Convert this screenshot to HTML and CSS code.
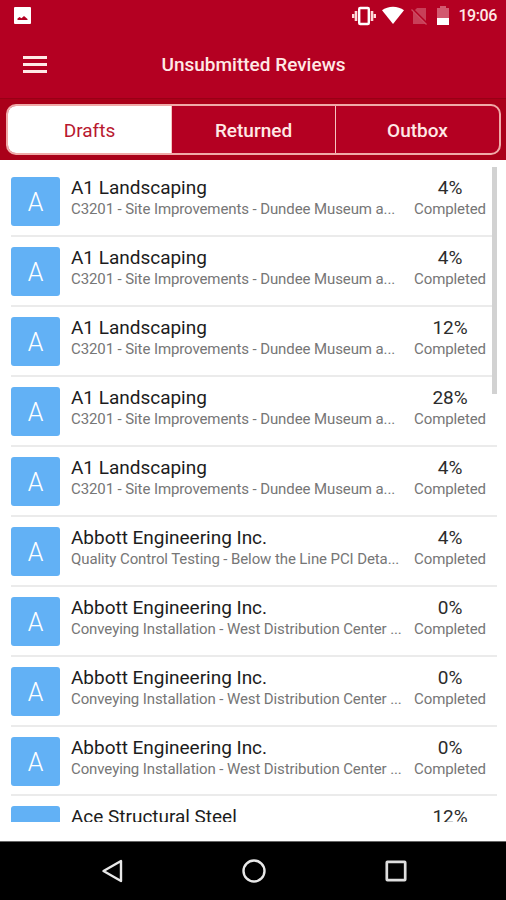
FILE: index.html
```html
<!DOCTYPE html>
<html lang="en">
<head>
    <meta charset="UTF-8">
    <meta name="viewport" content="width=device-width, initial-scale=1.0">
    <title>Unsubmitted Reviews</title>
    <link rel="stylesheet" href="styles.css">
</head>
<body>
    <header>
        <!-- Status bar -->
        <div class="status-bar">
            <svg class="photo-icon" width="17" height="17" viewBox="0 0 17 17">
                <rect width="17" height="17" rx="1" fill="#fff"/>
                <path d="M3.5 13v-1.5l2-1.5 2 1.2 2.5-2.2 3.5 3V13z" fill="#b40022"/>
            </svg>
            <svg class="vibrate-icon" width="24" height="20" viewBox="0 0 24 20">
                <path d="M1 8v4M4 5v10M20 5v10M23 8v4" stroke="#ffdada" stroke-width="2.6"/>
                <rect x="7.2" y="2" width="9.6" height="16" rx="1" fill="none" stroke="#fff" stroke-width="2.4"/>
            </svg>
            <svg class="wifi-icon" width="22" height="18" viewBox="0 0 22 18">
                <path d="M0 4.2C6-0.5 16-0.5 22 4.2L11 18z" fill="#fff"/>
            </svg>
            <svg class="sim-icon" width="17" height="18" viewBox="0 0 17 18">
                <path d="M6 1h9v16H2V5z" fill="#c83f58"/>
                <path d="M0 .5L16.5 17" stroke="#b40022" stroke-width="2"/>
                <path d="M0.5 2.5l15 15" stroke="#cd4c64" stroke-width="1.3"/>
            </svg>
            <svg class="battery-icon" width="12" height="19" viewBox="0 0 12 19">
                <path d="M0 2h3V0h6v2h3v10H0z" fill="#d2596f"/>
                <path d="M0 12h12v7H0z" fill="#fff"/>
            </svg>
            <span class="time">19:06</span>
        </div>

        <div class="title-bar">
            <div class="menu-btn"><span></span><span></span><span></span></div>
            <h1>Unsubmitted Reviews</h1>
        </div>

        <div class="tab-bar">
            <div class="tabs">
                <a class="active">Drafts</a>
                <a>Returned</a>
                <a>Outbox</a>
            </div>
        </div>
    </header>

    <main>
        <ul id="reviewList"></ul>
        <div class="scrollbar"></div>
    </main>

    <!-- Android navigation -->
    <nav>
        <svg width="22" height="24" viewBox="0 0 22 24">
            <path d="M20 2v20L2.5 12z" fill="none" stroke="#e8e8e8" stroke-width="2.4" stroke-linejoin="round"/>
        </svg>
        <svg width="24" height="24" viewBox="0 0 24 24">
            <circle cx="12" cy="12" r="10.5" fill="none" stroke="#e8e8e8" stroke-width="2.4"/>
        </svg>
        <svg width="22" height="22" viewBox="0 0 22 22">
            <rect x="1.8" y="1.8" width="18.4" height="18.4" rx="0.6" fill="none" stroke="#dedede" stroke-width="2.7"/>
        </svg>
    </nav>

<script>
    const landscaping = ['A1 Landscaping', 'C3201 - Site Improvements - Dundee Museum a...'];
    const testing = ['Abbott Engineering Inc.', 'Quality Control Testing - Below the Line PCI Deta...'];
    const conveying = ['Abbott Engineering Inc.', 'Conveying Installation - West Distribution Center ...'];
    const steel = ['Ace Structural Steel', ''];

    const reviews = [
        [landscaping, 4], [landscaping, 4], [landscaping, 12], [landscaping, 28], [landscaping, 4],
        [testing, 4], [conveying, 0], [conveying, 0], [conveying, 0], [steel, 12]
    ];

    // the last row is scrolled half out of view, only its first line shows
    document.getElementById('reviewList').innerHTML = reviews.map(([company, percent]) => `
        <li>
            <div class="avatar">${company[1] ? 'A' : ''}</div>
            <div class="details">
                <div class="name">${company[0]}</div>
                <div class="project">${company[1]}</div>
            </div>
            <div class="progress">
                <div class="percent">${percent}%</div>
                <div class="label">${company[1] ? 'Completed' : ''}</div>
            </div>
        </li>`).join('');
</script>
</body>
</html>
```

FILE: styles.css
```css
* {
    box-sizing: border-box;
}

body {
    margin: 0;
    height: 900px;
    display: flex;
    flex-direction: column;
    overflow: hidden;
    background-color: #fff;
    font-family: Roboto, "Liberation Sans", sans-serif;
}

header {
    height: 160px;
    background-color: #b40022;
    color: #ffe9e6;
}

/* Status bar */
.status-bar {
    height: 32px;
    padding: 0 9px 0 14px;
    display: flex;
    align-items: center;
}
.photo-icon {
    margin-right: auto;
    margin-top: -1px;
}
.vibrate-icon {
    margin-right: 6px;
}
.wifi-icon {
    margin-right: 7px;
    margin-top: -2px;
}
.sim-icon {
    margin-right: 9px;
}
.battery-icon {
    margin-right: 9px;
    margin-top: -1px;
}
.time {
    font-size: 16px;
    font-weight: 500;
    line-height: 32px;
    letter-spacing: -0.4px;
}

/* Title */
.title-bar {
    height: 66px;
    padding-bottom: 2px;
    display: grid;
    grid-template-columns: 81px 1fr 80px;
    align-items: center;
}
.menu-btn {
    width: 24px;
    margin-left: 23px;
    display: flex;
    flex-direction: column;
    gap: 4px;
}
.menu-btn span {
    height: 3px;
    background-color: #ffe9e6;
}
h1 {
    margin: 0;
    font-size: 19px;
    font-weight: 500;
    text-align: center;
}

/* Tabs */
.tab-bar {
    height: 62px;
    padding: 5px 5px 5px 6px;
    background-color: #aa0019;
    border-top: 1px solid #980016;
}
.tabs {
    height: 51px;
    display: flex;
    border: 2px solid #f0aaa8;
    border-radius: 10px;
    overflow: hidden;
    background-color: #b40022;
}
.tabs a {
    flex: 1;
    line-height: 49px;
    text-align: center;
    font-size: 19px;
    font-weight: 500;
}
.tabs a + a {
    border-left: 1px solid #f5c4c0;
}
.tabs .active {
    background-color: #fff;
    color: #b8182f;
    font-weight: 400;
}

/* Review list */
main {
    position: relative;
    height: 662px;
    padding: 7px 9px 0 11px;
    overflow: hidden;
}
ul {
    list-style-type: none;
    margin: 0;
    padding: 0;
}
li {
    height: 69.95px;
    padding-top: 10px;
    display: flex;
    border-bottom: 2px solid #ebebeb;
}
.avatar {
    flex: none;
    width: 49px;
    height: 49px;
    margin-right: 11px;
    border-radius: 3px;
    background-color: #62b1f5;
    color: #fff;
    font-size: 25px;
    font-weight: 300;
    line-height: 51px;
    text-align: center;
}
.details {
    flex: 1;
    min-width: 0;
    white-space: nowrap;
}
.name {
    font-size: 19px;
    line-height: 22px;
    letter-spacing: -0.02px;
    color: #1c1c1c;
}
.project, .label {
    font-size: 15px;
    line-height: 20px;
    letter-spacing: -0.1px;
    color: #767676;
}
.progress {
    flex: none;
    width: 94px;
    text-align: center;
}
.percent {
    font-size: 19px;
    line-height: 22px;
    letter-spacing: -0.1px;
    color: #2c2c2c;
}
.scrollbar {
    position: absolute;
    top: 7px;
    right: 9px;
    width: 5px;
    height: 227px;
    background-color: #d2d2d2;
}

/* Navigation */
nav {
    height: 59px;
    margin-top: auto;
    padding: 0 99px 0 101px;
    display: flex;
    justify-content: space-between;
    align-items: center;
    background-color: #000;
    border-top: 1px solid #666;
}
```
